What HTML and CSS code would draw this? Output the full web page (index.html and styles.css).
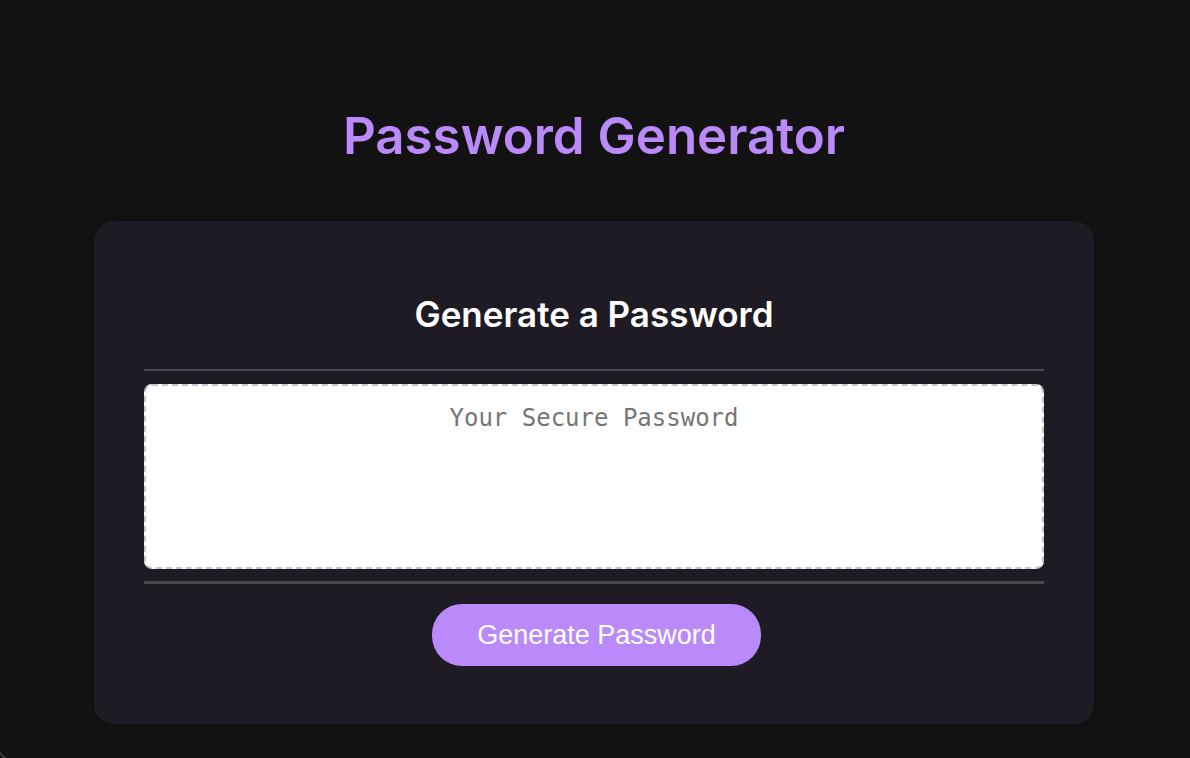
FILE: index.html
```html
<!DOCTYPE html>
<html lang="en">
<head>
<meta charset="utf-8">
<meta name="viewport" content="width=device-width, initial-scale=1">
<title>Password Generator</title>
<link rel="stylesheet" href="styles.css">
</head>
<body>
<div class="wrapper">
  <header class="page-header">
    <h1 class="page-title">Password Generator</h1>
  </header>
  <main class="card">
    <div class="card-header">
      <h2 class="card-title">Generate a Password</h2>
    </div>
    <div class="card-body">
      <textarea class="password" readonly placeholder="Your Secure Password" aria-label="Generated password"></textarea>
    </div>
    <div class="card-footer">
      <button type="button" class="btn">Generate Password</button>
    </div>
  </main>
</div>
</body>
</html>
```

FILE: styles.css
```css
*, *::before, *::after {
  box-sizing: border-box;
}

body {
  margin: 0;
  min-height: 100vh;
  background: #121212;
}

/* rounded corner of the window frame */
body::after {
  content: "";
  position: fixed;
  left: -1px;
  bottom: -1px;
  width: 20px;
  height: 20px;
  border-bottom-left-radius: 10px;
  border: 1px solid #555;
  border-top: 0;
  border-right: 0;
  clip-path: inset(13px 13px 0 0);
}

.wrapper {
  padding: 104px 50px 34px 48px;
}

.page-title,
.card-title {
  margin: 0;
  font-family: Inter, sans-serif;
  font-weight: 600;
  text-align: center;
}

.page-title {
  font-size: 51px;
  line-height: 64px;
  color: #bb8afa;
}

.card {
  max-width: 1000px;
  margin: 53px auto 0;
  padding: 67px 50px 58px;
  border-radius: 20px;
  background: #1f1b24;
  box-shadow: 0 1px 6px rgba(0, 0, 0, 0.1);
}

.card-header {
  padding-bottom: 29px;
  border-bottom: 2px solid #4a484b;
}

.card-title {
  font-size: 35px;
  line-height: 52px;
  color: #fff;
}

.card-body {
  padding: 13px 0 12px;
  border-bottom: 3px solid #4a484b;
}

.password {
  display: block;
  width: 100%;
  height: 185px;
  padding: 18px;
  border: 2px dashed #c1c7d0;
  border-radius: 8px;
  background: #fff;
  color: #333;
  font-family: "DejaVu Sans Mono", monospace;
  font-size: 24px;
  line-height: 28px;
  text-align: center;
  resize: none;
}

.password::placeholder {
  color: #757575;
  opacity: 1;
}

.card-footer {
  display: flex;
  justify-content: center;
  padding: 20px 0 0 5px;
}

.btn {
  padding: 15px 45px;
  border: 0;
  border-radius: 30px;
  background: #bb8afa;
  color: #fff;
  font-family: "Liberation Sans", Arial, sans-serif;
  font-size: 27px;
  line-height: 32px;
  cursor: pointer;
}
```
